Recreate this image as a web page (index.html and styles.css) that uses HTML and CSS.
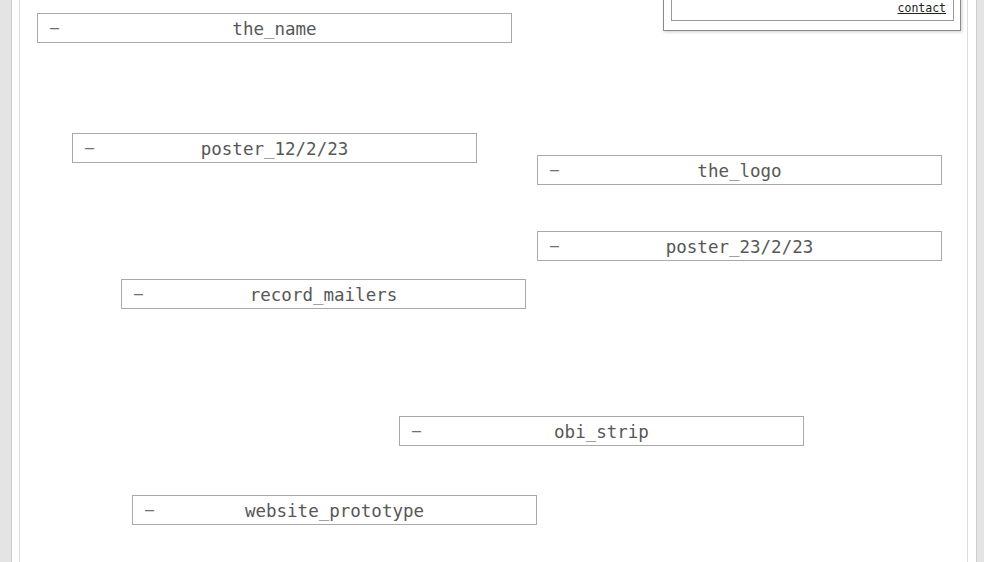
FILE: index.html
```html
<!DOCTYPE html>
<html>
<head>
<meta charset="utf-8">
<title>desktop</title>
<link rel="stylesheet" href="styles.css">
</head>
<body>
<div class="frame">
  <div class="desk">
    <div class="panel">
      <div class="panel-inner">
        <a class="contact" href="#">contact</a>
      </div>
    </div>
    <div class="win w-name"><span class="min">–</span><span class="title">the_name</span></div>
    <div class="win w-p1"><span class="min">–</span><span class="title">poster_12/2/23</span></div>
    <div class="win w-logo"><span class="min">–</span><span class="title">the_logo</span></div>
    <div class="win w-p2"><span class="min">–</span><span class="title">poster_23/2/23</span></div>
    <div class="win w-rec"><span class="min">–</span><span class="title">record_mailers</span></div>
    <div class="win w-obi"><span class="min">–</span><span class="title">obi_strip</span></div>
    <div class="win w-web"><span class="min">–</span><span class="title">website_prototype</span></div>
  </div>
</div>
</body>
</html>
```
FILE: styles.css
```css
html, body {
  margin: 0;
  padding: 0;
  background: #e4e4e4;
  overflow: hidden;
}
body {
  height: 562px;
  font-family: "DejaVu Sans Mono", "Liberation Mono", monospace;
}
.frame {
  margin-left: 11px;
  height: 562px;
  background: #fff;
  border-left: 1px solid #cdcdcd;
  border-right: 1px solid #cdcdcd;
  padding: 0 8px 0 7px;
  box-sizing: content-box;
  width: 949px;
}
.desk {
  position: relative;
  height: 562px;
  border-left: 1px solid #dcdcdc;
  border-right: 1px solid #dcdcdc;
}
.win {
  position: absolute;
  width: 405px;
  height: 30px;
  box-sizing: border-box;
  border: 1px solid #a9a9a9;
  background: #fff;
  display: flex;
  align-items: center;
  justify-content: center;
  color: #575757;
  font-size: 17.5px;
}
.min {
  position: absolute;
  left: 12px;
  top: 5px;
  color: #707070;
  font-size: 15px;
}
.title {
  padding-top: 1px;
}
.w-name { left: 17px; top: 13px; width: 475px; }
.w-p1 { left: 52px; top: 133px; }
.w-logo { left: 517px; top: 155px; }
.w-p2 { left: 517px; top: 231px; }
.w-rec { left: 101px; top: 279px; }
.w-obi { left: 379px; top: 416px; }
.w-web { left: 112px; top: 495px; }
.panel {
  position: absolute;
  left: 643px;
  top: -40px;
  width: 298px;
  height: 71px;
  box-sizing: border-box;
  border: 1px solid #8a8a8a;
  background: #fff;
  box-shadow: 1px 1px 3px rgba(0,0,0,0.2);
  padding: 0 6px 9px 7px;
  display: flex;
}
.panel-inner {
  flex: 1;
  border: 1px solid #999;
  border-top: none;
  display: flex;
  justify-content: flex-end;
  align-items: flex-end;
  padding: 0 6px 6px 0;
}
.contact {
  color: #222;
  font-size: 11.5px;
  line-height: 12px;
  text-decoration: underline;
  text-underline-offset: 1px;
  margin-right: 1px;
}
```
